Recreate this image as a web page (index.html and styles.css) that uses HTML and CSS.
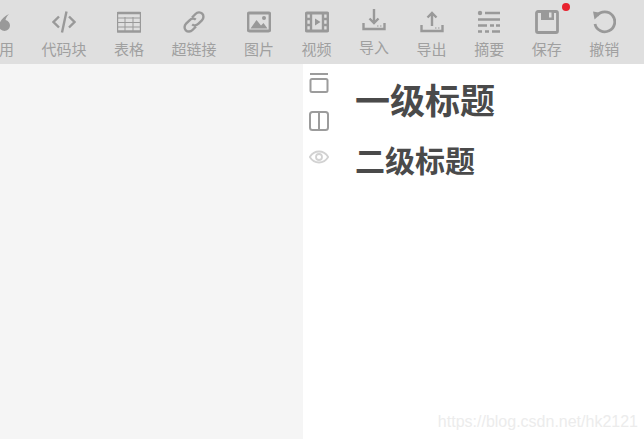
FILE: index.html
```html
<!DOCTYPE html>
<html lang="zh-CN">

<head>
	<meta charset="UTF-8">
	<title>编辑器</title>
	<link rel="stylesheet" href="styles.css">
</head>

<body>
	<div class="toolbar">
		<div class="tool">
			<svg class="icon" viewBox="0 0 24 24"><path class="fill" d="M22 4C17 6.500 12.500 10.500 12 16A5.500 5.500 0 1 0 18.500 10.100C19 8 20 6 22 4z"/></svg>
			<span class="label">引用</span>
		</div>
		<div class="tool">
			<svg class="icon" viewBox="0 0 24 24"><path class="line" d="M7 6.500 1.500 12 7 17.500M17 6.500l5.500 5.500-5.500 5.500M14.500 1.500l-4.500 21"/></svg>
			<span class="label">代码块</span>
		</div>
		<div class="tool">
			<svg class="icon" viewBox="0 0 24 24"><rect class="line" x="0" y="3" width="24" height="18.500" rx="1.500"/><path class="thin" d="M0 8h24M0 12.500h24M0 17h24M8 7v14M16 7v14"/></svg>
			<span class="label">表格</span>
		</div>
		<div class="tool">
			<svg class="icon" viewBox="0 0 24 24"><path class="line" d="M10 7.500 13.500 4c2-2 5-2 6.700-.3s1.700 4.600-.3 6.600l-3.400 3.400c-2 2-4.700 2-6.300.6M14 16.500 10.500 20c-2 2-5 2-6.700.3S2.100 15.700 4.100 13.700l3.400-3.400c2-2 4.700-2 6.300-.6"/></svg>
			<span class="label">超链接</span>
		</div>
		<div class="tool">
			<svg class="icon" viewBox="0 0 24 24"><rect class="thick" x="1" y="3" width="22" height="18" rx="1.500"/><path class="fill" d="M3.500 18.500 9.500 10l4.500 5.500 2.500-2.500 4 5.500z"/><circle class="fill" cx="17" cy="8" r="2"/></svg>
			<span class="label">图片</span>
		</div>
		<div class="tool">
			<svg class="icon" viewBox="0 0 24 24"><rect class="thick" x="1" y="3" width="22" height="18" rx="1"/><path class="line" d="M6 3v18M18 3v18M1 9h5M1 15h5M18 9h5M18 15h5"/><path class="fill" d="M10 8.500 15.500 12 10 15.500z"/></svg>
			<span class="label">视频</span>
		</div>
		<div class="tool tool-raised">
			<svg class="icon" viewBox="0 0 24 24"><path class="line" d="M1.500 15v6h21v-6M12 1v14M7.500 10.500 12 15l4.500-4.500"/><path class="thin" d="M15 18h1.500M18 18h1.500"/></svg>
			<span class="label">导入</span>
		</div>
		<div class="tool">
			<svg class="icon" viewBox="0 0 24 24"><path class="line" d="M1.500 15v6h21v-6M12 16V3M7.500 7.500 12 3l4.500 4.500"/><path class="thin" d="M15 18h1.500M18 18h1.500"/></svg>
			<span class="label">导出</span>
		</div>
		<div class="tool">
			<svg class="icon" viewBox="0 0 24 24"><circle class="fill" cx="3" cy="3" r="2.200"/><path class="line" d="M8 3h15M1 9.500h22M1 15.500h9M13 15.500h4M19 15.500h4M1 21.500h4M8 21.500h4M15 21.500h8"/></svg>
			<span class="label">摘要</span>
		</div>
		<div class="tool">
			<svg class="icon" viewBox="0 0 24 24"><path class="thick" d="M3 1.500h18A1.500 1.500 0 0 1 22.500 3v18a1.500 1.500 0 0 1-1.500 1.500H3A1.500 1.500 0 0 1 1.500 21V3A1.500 1.500 0 0 1 3 1.500z"/><path class="fill" d="M6 1h13v9H6z"/><rect x="14" y="2.500" width="2.500" height="5" fill="#dfdfdf"/></svg>
			<span class="label">保存</span>
			<i class="dot"></i>
		</div>
		<div class="tool">
			<svg class="icon" viewBox="0 0 24 24"><path class="thick" d="M5 5.500A10 10 0 1 1 3 14"/><path class="fill" d="M1 1.500 9.500 3 2.500 9.500z"/></svg>
			<span class="label">撤销</span>
		</div>
	</div>

	<div class="main">
		<div class="left"></div>
		<div class="right">
			<div class="side">
				<svg class="side-icon" viewBox="0 0 20 20"><path class="side-line" d="M1 1h18"/><rect class="side-line" x="1.500" y="6" width="17" height="13" rx="1.500"/></svg>
				<svg class="side-icon" viewBox="0 0 20 20"><rect class="side-line" x="1" y="1" width="18" height="18" rx="2.500"/><path class="side-line" d="M10 1v18"/></svg>
				<svg class="side-icon side-icon-off" viewBox="0 0 20 20"><path class="side-line" d="M.8 10C3 6.500 6.200 4.500 10 4.500s7 2 9.200 5.500c-2.200 3.500-5.400 5.500-9.200 5.500S3 13.500.8 10z"/><circle class="side-line" cx="10" cy="10" r="3"/></svg>
			</div>
			<div class="doc">
				<h1>一级标题</h1>
				<h2>二级标题</h2>
			</div>
			<span class="watermark">https://blog.csdn.net/hk2121</span>
		</div>
	</div>
</body>

</html>
```

FILE: styles.css
```css
* {
	margin: 0;
	padding: 0;
	box-sizing: border-box;
}

html, body {
	width: 100%;
	height: 100%;
	overflow: hidden;
}

body {
	display: flex;
	flex-direction: column;
	font-family: "Liberation Sans", "Noto Sans CJK SC", sans-serif;
	background: #fff;
}

.toolbar {
	display: flex;
	gap: 27.5px;
	flex: none;
	height: 64px;
	margin-left: -16px;
	background: #dfdfdf;
	overflow: hidden;
}

.tool {
	position: relative;
	display: flex;
	flex-direction: column;
	align-items: center;
	flex: none;
	padding-top: 10px;
}

.icon {
	display: block;
	width: 24px;
	height: 24px;
}

.line, .thin, .thick {
	fill: none;
	stroke: #999;
}

.line {
	stroke-width: 2.4;
}

.thin {
	stroke-width: 1;
}

.thick {
	stroke-width: 2.8;
}

.fill {
	fill: #999;
}

.label {
	margin-top: 6px;
	font-size: 15px;
	line-height: 20px;
	color: #a0a0a0;
	white-space: nowrap;
}

.tool-raised {
	padding-top: 8px;
}

.dot {
	position: absolute;
	top: 3px;
	right: -8px;
	width: 8px;
	height: 8px;
	border-radius: 50%;
	background: #e8222e;
}

.main {
	display: flex;
	flex: 1;
}

.left {
	width: 303px;
	background: #f5f5f5;
}

.right {
	position: relative;
	display: flex;
	flex: 1;
	background: #fff;
}

.side {
	display: flex;
	flex-direction: column;
	align-items: center;
	gap: 18px;
	width: 33px;
	padding-top: 9px;
	padding-right: 1px;
}

.side-icon {
	display: block;
	width: 20px;
	height: 20px;
}

.side-line {
	fill: none;
	stroke: #9c9c9c;
	stroke-width: 2;
}

.side-icon-off {
	margin-top: -2px;
}

.side-icon-off .side-line {
	stroke: #d2d2d2;
	stroke-width: 1.800;
}

.doc {
	padding: 14px 0 0 19px;
	color: #4a4a4a;
}

h1 {
	font-size: 35px;
	line-height: 48px;
	font-weight: bold;
}

h2 {
	margin-top: 16px;
	font-size: 30px;
	line-height: 40px;
	font-weight: bold;
}

.watermark {
	position: absolute;
	right: 6px;
	bottom: 8px;
	font-size: 16px;
	color: #ececec;
}
```
